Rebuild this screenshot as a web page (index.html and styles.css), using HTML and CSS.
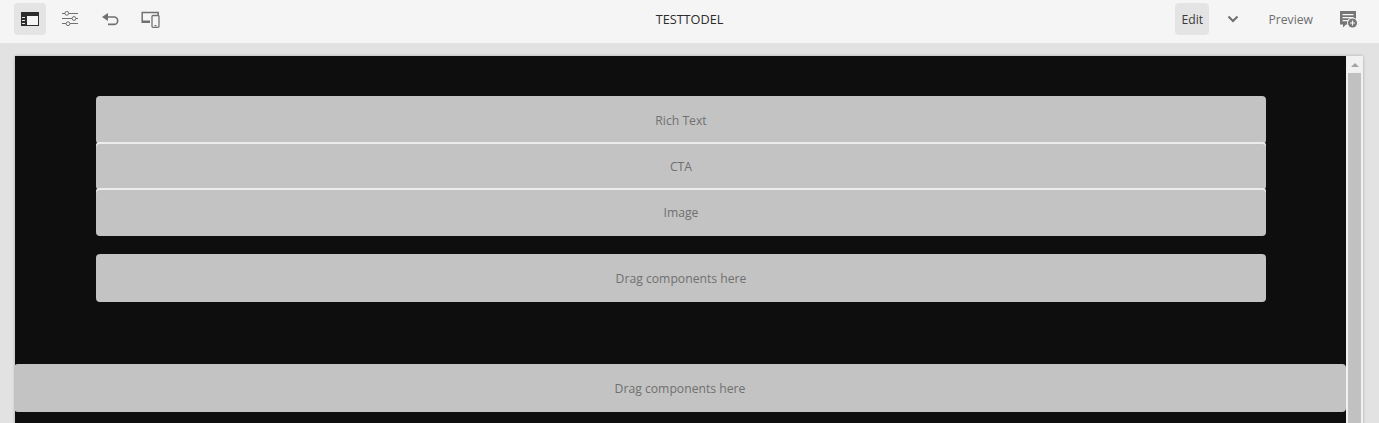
FILE: index.html
```html
<!DOCTYPE html>
<html lang="en">

<head>
    <meta charset="UTF-8">
    <meta name="viewport" content="width=device-width, initial-scale=1.0">
    <title>TESTTODEL</title>
    <link rel="stylesheet" href="styles.css">
</head>

<body>
    <header class="toolbar">
        <div class="toolbar-left">
            <button class="tool-btn active" aria-label="Side panel">
                <svg width="18" height="14" viewBox="0 0 18 14">
                    <path fill="#2c2c2c" d="M0 0h18v14H0z"/>
                    <path fill="#f5f5f5" d="M6 4h11v9H6z"/>
                    <path fill="#e8e8e8" d="M1 5h3v1H1zM1 8h3v1H1zM1 11h3v1H1z"/>
                </svg>
            </button>
            <button class="tool-btn" aria-label="Properties">
                <svg width="18" height="16" viewBox="0 0 18 16" fill="none" stroke="#707070">
                    <path d="M1 2.500h3M8 2.500h9M1 7.500h10M15 7.500h2M1 12.500h4M9 12.500h8"/>
                    <circle cx="5.800" cy="2.300" r="1.900"/>
                    <circle cx="13" cy="7.500" r="1.900"/>
                    <circle cx="7" cy="12.700" r="1.900"/>
                </svg>
            </button>
            <button class="tool-btn" aria-label="Undo">
                <svg width="18" height="16" viewBox="0 0 18 16" fill="none">
                    <path stroke="#707070" stroke-width="1.600" d="M6 6h7a3.700 3.700 0 0 1 0 7.400H7"/>
                    <path fill="#707070" d="M1 6 7 2v8z"/>
                </svg>
            </button>
            <button class="tool-btn" aria-label="Emulator">
                <svg width="19" height="17" viewBox="0 0 19 17" fill="none">
                    <path stroke="#707070" stroke-width="1.500" d="M1.200 10V1.500h16V4"/>
                    <path fill="#707070" d="M0.500 9.500H9V12H0.500z"/>
                    <rect x="11" y="4.500" width="7" height="11.800" rx="1" stroke="#707070" stroke-width="1.300"/>
                    <path fill="#707070" d="M13.500 14h2v1.200h-2z"/>
                </svg>
            </button>
        </div>
        <div class="page-title">TESTTODEL</div>
        <div class="toolbar-right">
            <button class="mode-btn active">Edit</button>
            <button class="chevron-btn" aria-label="Modes">
                <svg width="12" height="8" viewBox="0 0 12 8" fill="none">
                    <path stroke="#6e6e6e" stroke-width="2" d="M1.500 1.500 6 6l4.500-4.500"/>
                </svg>
            </button>
            <button class="mode-btn">Preview</button>
            <button class="notes-btn" aria-label="Annotations">
                <svg width="18" height="18" viewBox="0 0 18 18">
                    <path fill="#767676" d="M0 1h16v13.500H6l-3 3v-3H0z"/>
                    <path fill="#f5f5f5" d="M2.500 4h11v1.200h-11zM2.500 7h11v1.200h-11zM2.500 10h6v1.200h-6z"/>
                    <circle cx="12.500" cy="13" r="5.500" fill="#f5f5f5"/>
                    <circle cx="12.500" cy="13" r="4.500" fill="#767676"/>
                    <path fill="#f5f5f5" d="M11.900 10.500h1.200v1.900H15v1.200h-1.900v1.900h-1.200v-1.900H10v-1.200h1.900z"/>
                </svg>
            </button>
        </div>
    </header>

    <main class="frame">
        <div class="viewport">
            <section class="container">
                <div class="group">
                    <div class="placeholder">Rich Text</div>
                    <div class="placeholder joined">CTA</div>
                    <div class="placeholder joined">Image</div>
                </div>
                <div class="placeholder">Drag components here</div>
            </section>
            <div class="placeholder full">Drag components here</div>
        </div>
        <div class="scrollbar">
            <div class="scroll-up"></div>
            <div class="scroll-thumb"></div>
        </div>
    </main>
</body>

</html>
```

FILE: styles.css
```css
html, body {
    height: 100%;
}

body {
    margin: 0;
    overflow: hidden;
    background-color: #e2e2e2;
    font-family: 'Open Sans', 'Noto Sans', sans-serif;
    font-size: 12px;
    color: #6e6e6e;
}

button {
    border: 0;
    padding: 0;
    background: none;
    font: inherit;
    color: inherit;
}

.toolbar {
    display: grid;
    grid-template-columns: 1fr auto 1fr;
    align-items: start;
    height: 43px;
    padding: 3px 14px 0;
    background-color: #f5f5f5;
    box-sizing: border-box;
}

.toolbar-left {
    display: flex;
    gap: 8px;
}

.toolbar-right {
    display: flex;
    align-items: center;
    justify-content: flex-end;
    margin-right: 7px;
}

.tool-btn {
    display: flex;
    align-items: center;
    justify-content: center;
    width: 32px;
    height: 32px;
    border-radius: 4px;
}

.tool-btn.active {
    background-color: #e4e4e4;
}

.page-title {
    line-height: 32px;
    font-size: 12.700px;
    color: #2c2c2c;
}

.mode-btn {
    height: 32px;
    padding: 0 6px;
    border-radius: 4px;
    font-size: 12.200px;
}

.mode-btn.active {
    width: 34px;
    background-color: #e4e4e4;
    color: #3a3a3a;
}

.chevron-btn {
    display: flex;
    align-items: center;
    justify-content: center;
    width: 12px;
    height: 32px;
    margin: 0 23px 0 18px;
}

.notes-btn {
    display: flex;
    margin-left: 21px;
}

.frame {
    display: flex;
    width: 1348px;
    height: 500px;
    margin: 13px 0 0 15px;
    box-shadow: 0 0 3px rgba(0, 0, 0, 0.25);
}

.viewport {
    flex: 1;
    min-width: 0;
    padding-top: 40px;
    background-color: #0e0e0e;
}

.container {
    width: 1170px;
    margin: 0 0 62px 81px;
}

.group {
    margin-bottom: 18px;
}

.placeholder {
    display: flex;
    align-items: center;
    justify-content: center;
    height: 48px;
    background-color: #c3c3c3;
    border-radius: 4px;
    font-size: 12.200px;
    color: #707070;
}

/* rows overlap by 2px, the light line sits on top of the next row */
.placeholder.joined {
    margin-top: -2px;
    box-shadow: inset 0 2px 0 #ececec;
}

.placeholder.full {
    margin-left: -1px;
}

.scrollbar {
    flex: none;
    width: 17px;
    background-color: #f1f1f1;
}

.scroll-up {
    height: 17px;
    position: relative;
}

.scroll-up::after {
    content: "";
    position: absolute;
    left: 5px;
    top: 7px;
    border-left: 4px solid transparent;
    border-right: 4px solid transparent;
    border-bottom: 4px solid #a3a3a3;
}

.scroll-thumb {
    width: 13px;
    height: 400px;
    margin-left: 2px;
    background-color: #c1c1c1;
}
```
